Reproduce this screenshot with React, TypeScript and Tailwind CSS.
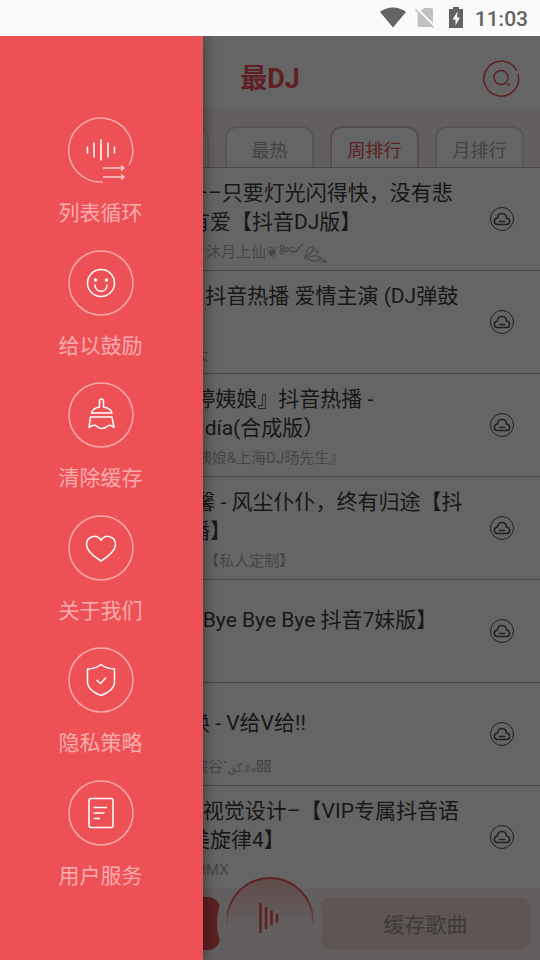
import type { ReactNode } from "react";

type Song = { title: string[]; artist: ReactNode };

function Flourish() {
  return (
    <svg width="48" height="20" viewBox="0 0 48 20" fill="none" stroke="currentColor" strokeWidth="1.2" className="inline-block align-middle" aria-hidden="true">
      <circle cx="3" cy="4" r="1.8" />
      <circle cx="3" cy="9" r="1.8" />
      <circle cx="7.500" cy="6.500" r="1.800" />
      <path d="M15 5c-3-2-5 0-4 2s5 2 7 0c2-2 3-4 6-6M11 8c3 2 6 1 8-1" />
      <circle cx="27" cy="15" r="1.500" />
      <path d="M27 13c0-5 2-9 6-9 3 0 2 2 0 2M28 14c2-4 6-7 9-7s3 3 0 3M29 15c5-3 10-3 13 0 1 1-1 2-3 1M30 16c3 3 7 2 9 2 3 0 5 1 8 1-2-3-4-4-6-3" />
    </svg>
  );
}

function MissingGlyphs() {
  return (
    <svg width="14" height="12" viewBox="0 0 14 12" fill="none" stroke="currentColor" strokeWidth="1" className="inline-block align-baseline" aria-hidden="true">
      <path d="M.5.5h5v11h-5zM.5.5l5 11M5.500.5l-5 11M8 .5h5v11H8zM8 .5l5 11M13 .5l-5 11" />
    </svg>
  );
}

const songs: Song[] = [
  { title: [" ––只要灯光闪得快，没有悲", "有爱【抖音DJ版】"], artist: <>❦沐月上仙❦<Flourish /></> },
  { title: [" - 抖音热播 爱情主演 (DJ弹鼓", " "], artist: "大" },
  { title: [" 婷姨娘』抖音热播 -", "   día(合成版）"], artist: " 姨娘&上海DJ旸先生』" },
  { title: [" 馨 - 风尘仆仆，终有归途【抖", "播】"], artist: "   【私人定制】" },
  { title: ["–Bye Bye Bye 抖音7妹版】"], artist: " " },
  { title: ["换 - V给V给!!"], artist: <>峡谷`<bdi className="text-[11px]">ه٥.گق</bdi><MissingGlyphs /></> },
  { title: ["–视觉设计–【VIP专属抖音语", "美旋律4】"], artist: " RMX" },
];

const tabs = [
  { name: "最新", active: false },
  { name: "最热", active: false },
  { name: "周排行", active: true },
  { name: "月排行", active: false },
];

const ring = <circle cx="33" cy="33" r="32" strokeOpacity=".5" />;

const menu: { label: string; icon: ReactNode }[] = [
  {
    label: "列表循环",
    icon: (
      <>
        <path d="M35 65A32 32 0 1 1 61 48" strokeOpacity=".5" />
        <path d="M19.500 29.500v7M26 25.500v15M33 22.500v21M40 25.500v15M46.500 29.500v7" />
        <path d="M35 51h21M35 60h21M53 48.500l3 2.500-3 2.500M53 57.500l3 2.500-3 2.500" strokeOpacity=".7" />
      </>
    ),
  },
  {
    label: "给以鼓励",
    icon: (
      <>
        {ring}
        <circle cx="33" cy="33" r="13.500" />
        <path d="M27 34.500c0 9 12 9 12 0" />
        <circle cx="27.500" cy="30" r="1" fill="white" />
        <circle cx="38.500" cy="30" r="1" fill="white" />
      </>
    ),
  },
  {
    label: "清除缓存",
    icon: (
      <>
        {ring}
        <path d="M31.500 25v-6q0-2 2-2t2 2v6c5 1 8 3 8.500 6H23.500c.500-3 3-5 8-6zM22.500 35h21.500l2 10.500c-3-3-5-3-7-1q-2 2-5 2t-5-2c-2-2-4-2-8 1z" />
      </>
    ),
  },
  {
    label: "关于我们",
    icon: (
      <>
        {ring}
        <path d="M33 46C25 41 18.500 36 18.500 29.500c0-8.500 10.500-11 14.500-4 4-7 14.500-4.500 14.500 4C47.500 36 41 41 33 46z" />
      </>
    ),
  },
  {
    label: "隐私策略",
    icon: (
      <>
        {ring}
        <path d="M33 17.500c4 3 9 4.500 13.500 4.500v13c0 6-6 11-13.500 13.500C25.500 46 19.500 41 19.500 35V22c4.500 0 9.500-1.500 13.500-4.500zM28.500 33l4 3.500 5.500-6" />
      </>
    ),
  },
  {
    label: "用户服务",
    icon: (
      <>
        {ring}
        <rect x="21" y="18.500" width="24" height="29" rx="2" />
        <path d="M25.500 27.500h13.500M25.500 33h11M25.500 38.500h6.500" />
      </>
    ),
  },
];

function StatusBar() {
  return (
    <div className="flex h-9 shrink-0 items-center justify-end bg-[#fafafa] pr-3 text-[#636363]">
      <svg width="28" height="22" viewBox="0 0 28 22" fill="currentColor" aria-hidden="true">
        <path d="M1 5C8-1 20-1 27 5L14 20.500z" />
      </svg>
      <svg width="20" height="22" viewBox="0 0 20 22" className="ml-2 text-[#c1c1c1]" aria-hidden="true">
        <path d="M9 1h7.500q1.500 0 1.500 1.500V19q0 1-1 1H4q-1.500 0-1.500-1.500V7z" fill="currentColor" />
        <path d="M1.500 1l18 18" stroke="#fafafa" strokeWidth="2" />
        <path d="M.5 2.500l18 18" stroke="currentColor" strokeWidth="1.600" />
      </svg>
      <svg width="14" height="22" viewBox="0 0 14 22" className="ml-[14px]" aria-hidden="true">
        <path d="M4 0h6v2h4v19H0V2h4z" fill="currentColor" />
        <path d="M8.500 4.500L3.500 12.500H6.500v6l4.500-8H8z" fill="#fafafa" />
      </svg>
      <span className="ml-3 pt-px text-[21px] leading-6 font-medium">11:03</span>
    </div>
  );
}

function CloudIcon() {
  return (
    <svg width="24" height="24" viewBox="0 0 24 24" fill="none" stroke="currentColor" aria-hidden="true">
      <circle cx="12" cy="12" r="11.500" strokeWidth="1" />
      <path d="M8 17.500c-5 0-4.500-6-.5-6.500 0-6 9-6 9 0 4 .5 4.500 6.500-.5 6.500zM9.500 14.500h5" strokeWidth="1.600" strokeLinecap="round" />
    </svg>
  );
}

export default function App() {
  return (
    <div className="flex h-screen flex-col overflow-hidden font-[Roboto,'Noto_Sans_CJK_SC',sans-serif]">
      <StatusBar />
      <div className="relative flex min-h-0 flex-1 flex-col overflow-hidden bg-white">
        <header className="grid h-[72px] shrink-0 grid-cols-[1fr_auto_1fr] items-center bg-[#fcfcfc] pt-3">
          <h1 className="col-start-2 pt-0.5 text-[27px] leading-9 font-bold text-[#eb5055]">最DJ</h1>
          <button aria-label="搜索" className="mr-5 justify-self-end text-[#eb5055]">
            <svg width="38" height="38" viewBox="0 0 38 38" fill="none" stroke="currentColor" strokeWidth="1.500" className="block">
              <path d="M34.700 11.700A17.400 17.400 0 1 0 36 15" />
              <circle cx="19" cy="18.500" r="7" />
              <circle cx="26.500" cy="25.500" r=".6" />
            </svg>
          </button>
        </header>

        <nav className="flex h-[60px] shrink-0 items-end justify-end overflow-hidden border-b border-[#b4b4b4] bg-[#f7eeef] pr-4">
          <div className="-mb-px flex gap-4">
            {tabs.map((tab) => (
              <button
                key={tab.name}
                className={
                  tab.active
                    ? "h-[42px] w-[89px] shrink-0 rounded-t-xl border-2 border-b-0 border-[#c8c8c8] bg-[#fcfcfc] pt-1.5 text-lg text-[#eb5055]"
                    : "h-[42px] w-[89px] shrink-0 rounded-t-xl border-2 border-b border-[#d8d8d8] border-b-[#b4b4b4] bg-[#fcfcfc] pt-1.5 text-lg text-[#a8a8a8]"
                }
              >
                {tab.name}
              </button>
            ))}
          </div>
        </nav>

        <ul className="min-h-0 flex-1 overflow-hidden bg-[#fdfdfd]">
          {songs.map((song, i) => (
            <li key={i} className="flex h-[103px] items-center justify-between border-b border-[#b4b4b4] pr-[26px] pl-[189px]">
              <div className="pt-0.5 whitespace-pre">
                <h2 className="flex h-[58px] flex-col justify-center text-[21px] leading-[29px] text-[#3c3c3c]">
                  {song.title.map((line, n) => (
                    <span key={n}>{line}</span>
                  ))}
                </h2>
                <p className="h-6 pl-1 text-[15px] leading-[30px] text-[#b0b0b0]">{song.artist}</p>
              </div>
              <button aria-label="缓存" className="text-[#505050]">
                <CloudIcon />
              </button>
            </li>
          ))}
        </ul>

        <footer className="relative h-[72px] shrink-0 bg-[#f7eeef]">
          <div className="relative h-full overflow-hidden">
            <div className="grid h-full grid-cols-2 gap-[100px] px-[9px] pt-[9px] pb-[10px]">
              <button aria-label="播放全部" className="rounded-xl bg-[#eb5055]" />
              <button className="rounded-xl bg-[#eed4ce] pt-1 text-[21px] text-[#989490]">缓存歌曲</button>
            </div>
            <div className="absolute top-[-18px] left-1/2 size-[106px] -translate-x-1/2 rounded-full bg-[#f7eeef]" />
          </div>
          <button aria-label="播放" className="absolute top-[-11px] left-1/2 -translate-x-1/2">
            <svg width="88" height="88" viewBox="0 0 88 88" className="block">
              <defs>
                <linearGradient id="disc" x1="0" y1="0" x2="0" y2="1">
                  <stop offset="0" stopColor="#f0bdba" />
                  <stop offset=".55" stopColor="#f8eeee" />
                  <stop offset="1" stopColor="#f7eeef" />
                </linearGradient>
                <linearGradient id="rim" x1="0" y1="0" x2="0" y2="1">
                  <stop offset="0" stopColor="#eb5055" />
                  <stop offset=".25" stopColor="#eb5055" />
                  <stop offset=".6" stopColor="#eb5055" stopOpacity="0" />
                </linearGradient>
              </defs>
              <circle cx="44" cy="44" r="43" fill="url(#disc)" stroke="url(#rim)" strokeWidth="1.800" />
              <path d="M34.500 27v28M40 31v20M45.500 34.500v13M51 38v6.500" stroke="#eb5055" strokeWidth="2.500" strokeLinecap="round" />
            </svg>
          </button>
        </footer>

        <div className="absolute inset-0 bg-black/60" />
        <aside className="absolute inset-y-0 left-0 w-[203px] bg-[#ed5155] shadow-[0_0_14px_rgba(0,0,0,0.5)]">
          <nav className="flex h-full flex-col items-center justify-between pt-[81px] pr-0.5 pb-[69px]">
            {menu.map((item) => (
              <button key={item.label} className="flex flex-col items-center gap-[15px] text-[21px] leading-[30px] text-[#f8acae]">
                <svg width="66" height="66" viewBox="0 0 66 66" fill="none" stroke="white" strokeWidth="1.500" strokeLinejoin="round" aria-hidden="true">
                  {item.icon}
                </svg>
                {item.label}
              </button>
            ))}
          </nav>
        </aside>
      </div>
    </div>
  );
}
